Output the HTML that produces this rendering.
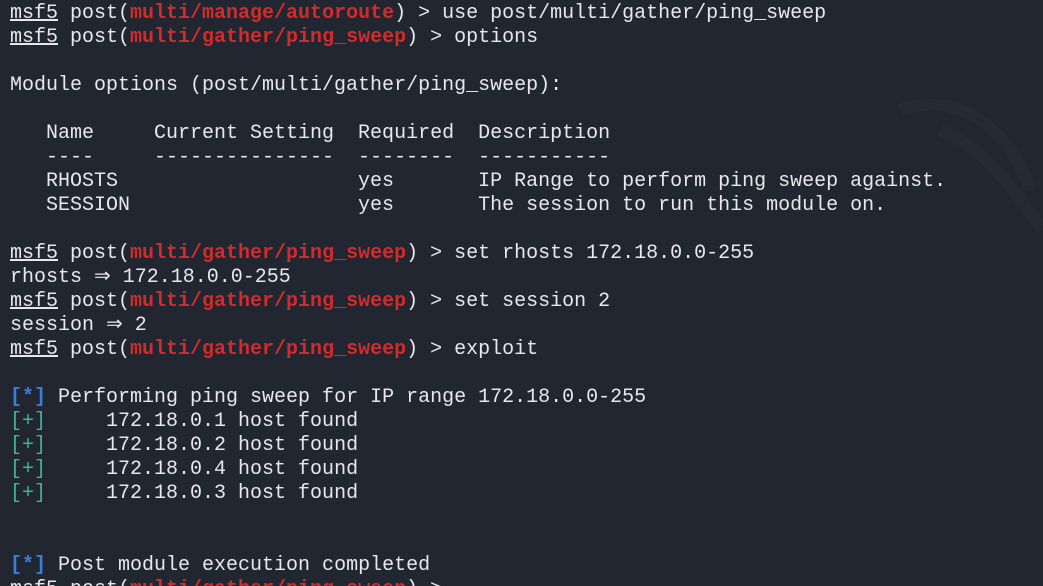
<!DOCTYPE html>
<html><head><meta charset="utf-8"><style>
html,body{margin:0;padding:0;background:#222631;width:1043px;height:586px;overflow:hidden}
pre{margin:0;padding:2px 0 0 10px;font-family:"Liberation Mono",monospace;font-size:20px;line-height:24px;color:#e8e8ea;position:relative;z-index:1}
.u{text-decoration:underline}
.r{color:#d42a2a;font-weight:bold}
.b{color:#3b7ddd;font-weight:bold}
.g{color:#3fb39c}
svg{position:absolute;left:0;top:0;z-index:0}
</style></head><body>
<svg width="1043" height="586"><path d="M900 110 C960 90 1010 130 1030 190 M940 130 C990 150 1020 200 1043 230" stroke="#262a35" stroke-width="12" fill="none"/></svg>
<pre><span class="u">msf5</span> post(<span class="r">multi/manage/autoroute</span>) &gt; use post/multi/gather/ping_sweep
<span class="u">msf5</span> post(<span class="r">multi/gather/ping_sweep</span>) &gt; options

Module options (post/multi/gather/ping_sweep):

   Name     Current Setting  Required  Description
   ----     ---------------  --------  -----------
   RHOSTS                    yes       IP Range to perform ping sweep against.
   SESSION                   yes       The session to run this module on.

<span class="u">msf5</span> post(<span class="r">multi/gather/ping_sweep</span>) &gt; set rhosts 172.18.0.0-255
rhosts ⇒ 172.18.0.0-255
<span class="u">msf5</span> post(<span class="r">multi/gather/ping_sweep</span>) &gt; set session 2
session ⇒ 2
<span class="u">msf5</span> post(<span class="r">multi/gather/ping_sweep</span>) &gt; exploit

<span class="b">[*]</span> Performing ping sweep for IP range 172.18.0.0-255
<span class="g">[+]</span>     172.18.0.1 host found
<span class="g">[+]</span>     172.18.0.2 host found
<span class="g">[+]</span>     172.18.0.4 host found
<span class="g">[+]</span>     172.18.0.3 host found


<span class="b">[*]</span> Post module execution completed
<span class="u">msf5</span> post(<span class="r">multi/gather/ping_sweep</span>) &gt; 
</pre>
</body></html>
